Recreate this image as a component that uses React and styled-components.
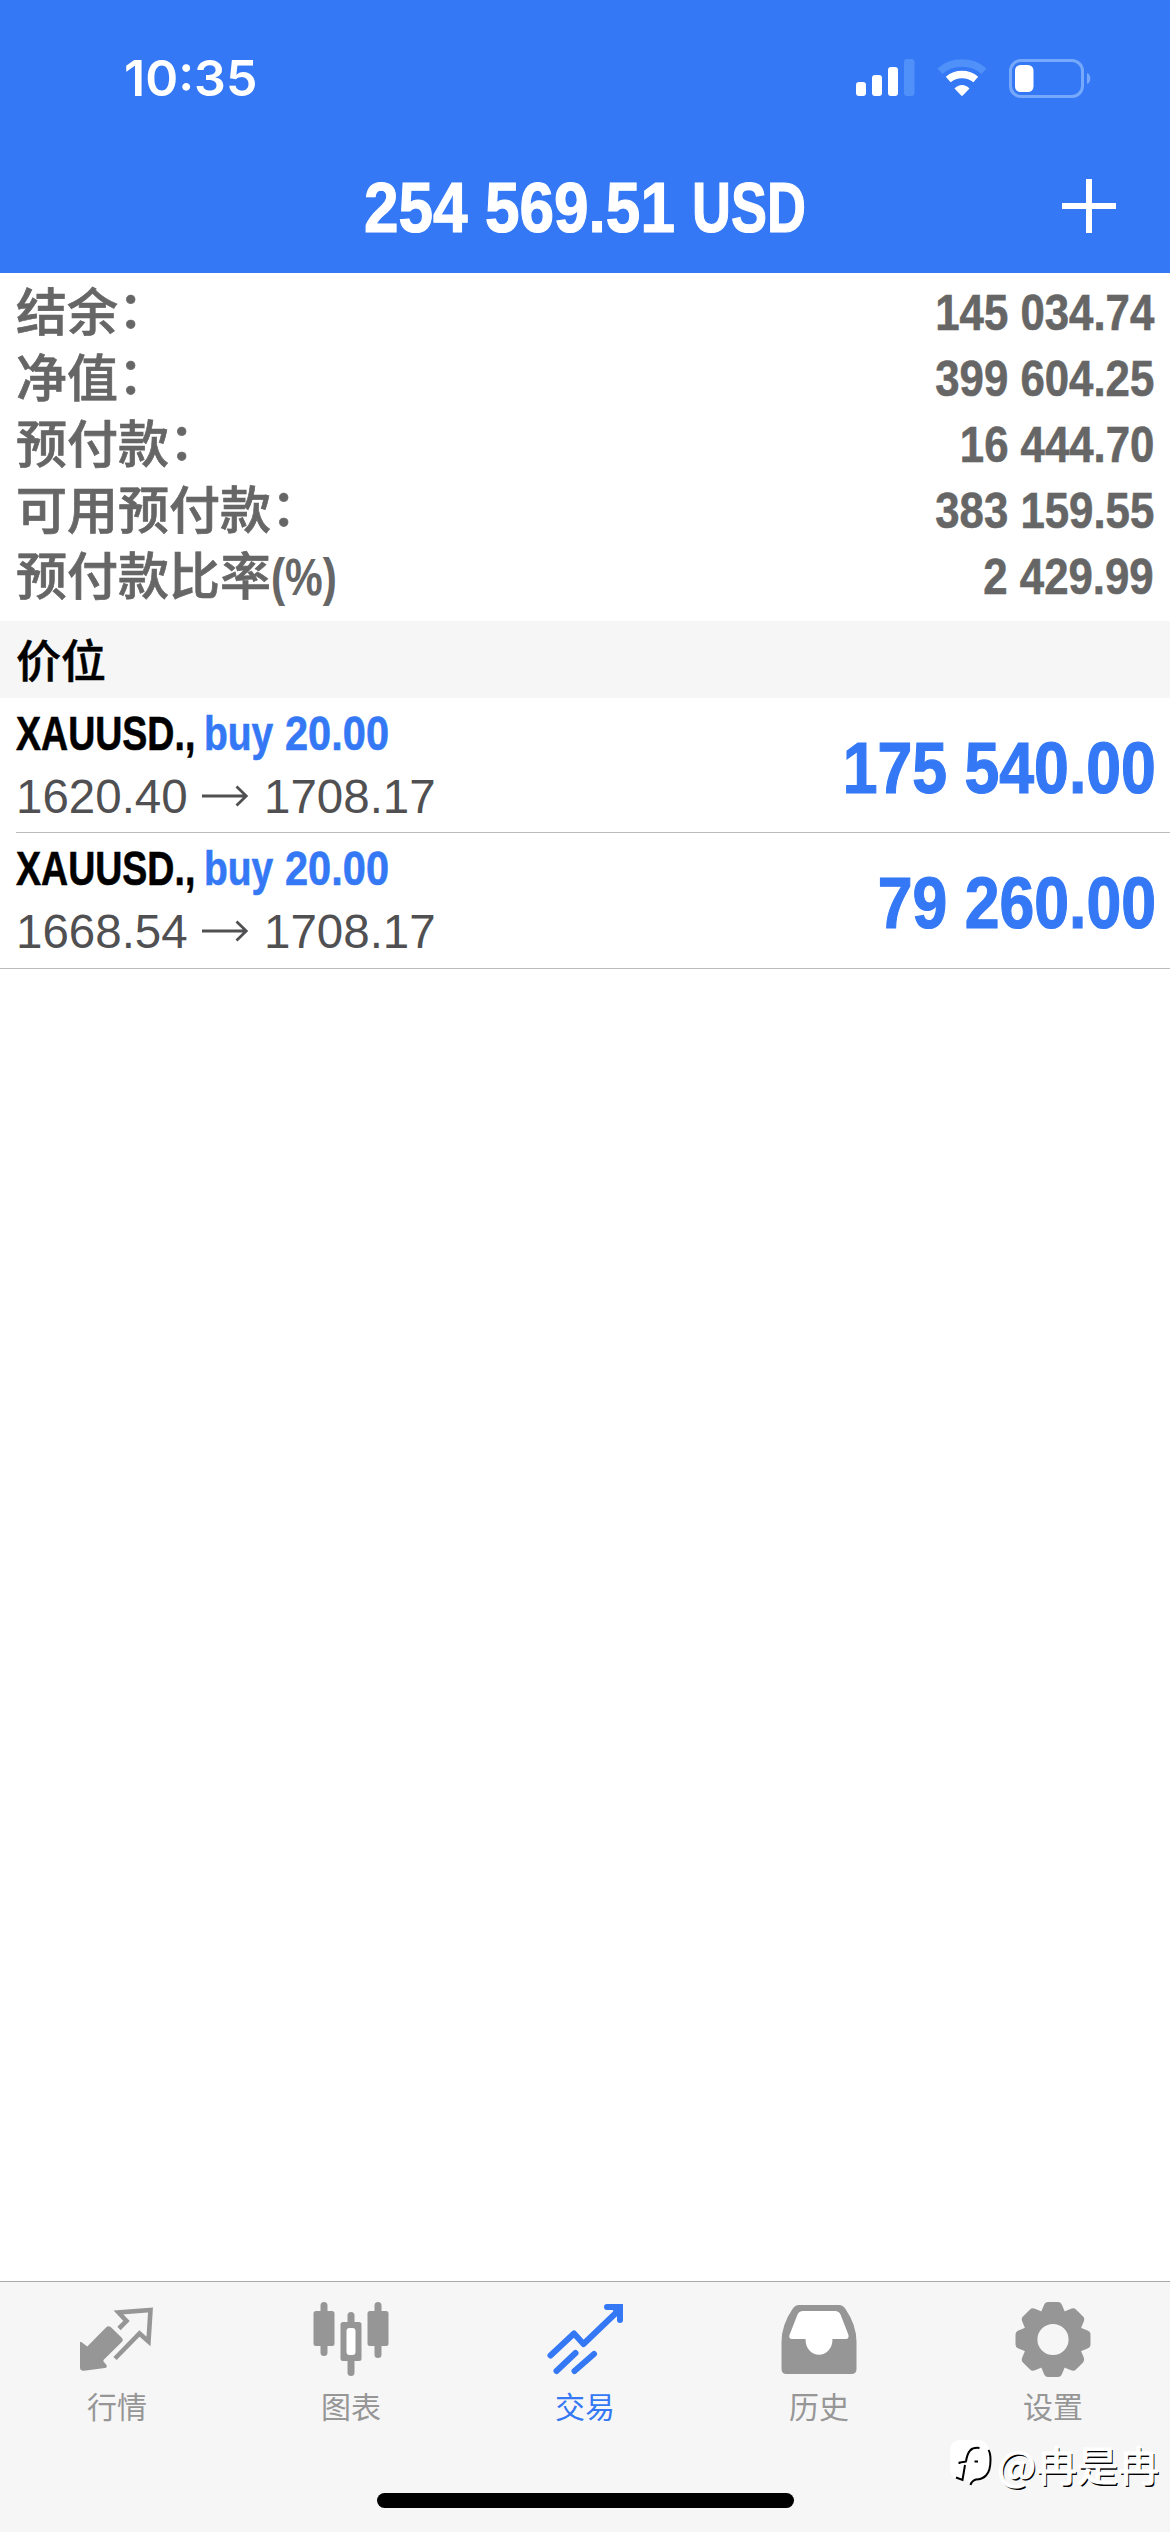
import React from 'react';
import styled, { createGlobalStyle } from 'styled-components';

const GlobalStyle = createGlobalStyle`
  body {
    margin: 0;
    background: #fff;
  }

  * {
    box-sizing: border-box;
  }
`;

const Screen = styled.div`
  position: relative;
  display: flex;
  flex-direction: column;
  width: 1170px;
  height: 2532px;
  overflow: hidden;
  background: #fff;
  font-family: 'Liberation Sans', 'Noto Sans CJK SC', sans-serif;
`;

const Header = styled.header`
  height: 273px;
  background: #3478f5;
  color: #fff;
`;

const StatusBar = styled.div`
  display: flex;
  justify-content: space-between;
  align-items: center;
  height: 156px;
  padding: 0 79px 0 124px;
`;

const Clock = styled.span`
  font-family: Inter, sans-serif;
  font-size: 50px;
  font-weight: 600;
  line-height: 60px;
`;

const StatusIcons = styled.div`
  display: flex;
  align-items: center;
  gap: 22px;
`;

const TitleBar = styled.div`
  display: grid;
  grid-template-columns: 1fr 442px 1fr;
  align-items: center;
  height: 104px;
`;

const Title = styled.h1`
  display: flex;
  grid-column: 2;
  margin: 0;
  font-size: 71px;
  line-height: 80px;
`;

const AddButton = styled.button`
  justify-self: end;
  display: flex;
  margin: 0 54px 4px 0;
  padding: 0;
  border: 0;
  background: none;
  color: #fff;
`;

const Slot = styled.span`
  display: block;
  flex: none;
  width: ${(p) => (p.$width ? `${p.$width}px` : 'auto')};
`;

// A run of bold text squeezed to the given width ratio
const Squeezed = styled.span`
  display: inline-block;
  font-weight: 700;
  white-space: pre;
  transform: scaleX(${(p) => p.$ratio || 0.875});
  transform-origin: ${(p) => p.$origin || 'left'} center;
  -webkit-text-stroke: ${(p) => p.$stroke || 0.6}px currentColor;
`;

const Summary = styled.section`
  height: 348px;
  padding: 6px 16px 0 16px;
  color: #666;
`;

const SummaryRow = styled.div`
  display: flex;
  justify-content: space-between;
  align-items: center;
  height: 66px;
`;

const SummaryLabel = styled.span`
  display: flex;
  padding-top: 4px;
  font-size: 51px;
  font-weight: 500;
  line-height: 62px;
  -webkit-text-stroke: 0.7px currentColor;
`;

const Colon = styled.span`
  font-family: 'Liberation Sans', 'Noto Sans CJK JP', sans-serif;
  font-feature-settings: 'halt';
`;

const SummaryValue = styled.span`
  padding-top: 2px;
  font-size: 50px;
  line-height: 64px;
`;

const SectionTitle = styled.h2`
  height: 77px;
  margin: 0;
  padding-left: 16px;
  background: #f6f6f6;
  color: #000;
  font-family: 'Noto Sans CJK SC', sans-serif;
  font-size: 45px;
  font-weight: 500;
  line-height: 75px;
  -webkit-text-stroke: 0.5px currentColor;
`;

const PositionItem = styled.div`
  display: flex;
  justify-content: space-between;
  height: ${(p) => (p.$last ? 136 : 135)}px;
  margin-left: ${(p) => (p.$last ? 0 : 16)}px;
  padding-left: ${(p) => (p.$last ? 16 : 0)}px;
  padding-right: 14px;
  border-bottom: 1px solid #bcbcbe;
`;

const Deal = styled.div`
  display: flex;
  flex-direction: column;
  padding-top: 7px;
`;

const DealName = styled.div`
  display: flex;
  height: 62px;
  color: #000;
  font-size: 47.5px;
  line-height: 58px;
`;

const Buy = styled.span`
  display: flex;
  color: #3478f5;
`;

const Prices = styled.div`
  display: flex;
  align-items: center;
  height: 60px;
  color: #505052;
  font-size: 47.5px;
  line-height: 60px;
`;

const ArrowSlot = styled.span`
  display: flex;
  width: 62px;
  padding-bottom: 2px;
`;

const Profit = styled.div`
  padding-top: 30px;
  color: #3478f5;
  font-size: 71.5px;
  line-height: 80px;
`;

const TabBar = styled.nav`
  display: grid;
  grid-template-columns: repeat(5, 1fr);
  height: 251px;
  margin-top: auto;
  padding-top: 17px;
  border-top: 1px solid #a9a9ab;
  background: #f6f6f6;
`;

const Tab = styled.div`
  display: flex;
  flex-direction: column;
  align-items: center;
  gap: 6px;
  color: ${(p) => (p.$active ? '#3478f5' : '#969696')};
  font-family: 'Noto Sans CJK SC', sans-serif;
  font-size: 30px;
  font-weight: 400;
  line-height: 40px;
`;

const HomeIndicator = styled.div`
  position: absolute;
  left: 377px;
  bottom: 24px;
  width: 417px;
  height: 15px;
  border-radius: 8px;
  background: #000;
`;

const Watermark = styled.div`
  position: absolute;
  right: 11px;
  bottom: 38px;
  display: flex;
  align-items: center;
  gap: 4px;
  color: #fff;
  font-family: 'Noto Sans CJK SC', sans-serif;
  font-size: 41px;
  line-height: 56px;
`;

const WatermarkText = styled.span`
  padding-bottom: 3px;
  text-shadow: 1.5px 1.5px 0 #000;
  -webkit-text-stroke: 1.2px #fff;
`;

const SignalIcon = () => (
  <svg width="59" height="38" viewBox="0 0 59 38" fill="#fff">
    <rect x="0" y="23" width="10" height="14" rx="3" />
    <rect x="16" y="16" width="10" height="21" rx="3" />
    <rect x="32" y="8" width="10" height="29" rx="3" />
    <rect x="48" y="0" width="10.5" height="37" rx="3" fill="#5090f9" />
  </svg>
);

const WifiIcon = () => (
  <svg width="50" height="38" viewBox="0 0 50 38" fill="none">
    <path d="M3 12.2C15 1.4 35 1.4 47 12.2" stroke="#5090f9" strokeWidth="7.5" />
    <path d="M11.2 20.5C19.2 13.8 30.8 13.8 38.8 20.5" stroke="#fff" strokeWidth="7.5" />
    <path d="M17.5 29.5C21.5 24.8 28.5 24.8 32.5 29.5L25.8 36.6Q25 37.4 24.2 36.6Z" fill="#fff" />
  </svg>
);

const BatteryIcon = () => (
  <svg width="82" height="39" viewBox="0 0 82 39">
    <rect x="1.5" y="1.5" width="72" height="36" rx="10.5" fill="none" stroke="#76a9fb" strokeWidth="3" />
    <rect x="6" y="6" width="18.5" height="27" rx="5.5" fill="#fff" />
    <path d="M78 14C82.5 15.5 82.5 23.5 78 25Z" fill="#76a9fb" />
  </svg>
);

const PlusIcon = () => (
  <svg width="54" height="54" viewBox="0 0 54 54" stroke="currentColor" strokeWidth="6">
    <path d="M27 0V54M0 27H54" />
  </svg>
);

const ArrowIcon = () => (
  <svg width="46" height="22" viewBox="0 0 46 22" fill="none" stroke="currentColor" strokeWidth="2.8">
    <path d="M0 11H44M34.5 1.5L44.3 11L34.5 20.5" />
  </svg>
);

const QuotesIcon = () => (
  <svg width="76" height="80" viewBox="0 0 76 80">
    <path
      d="M40 29.5L47.5 22L39.5 13.5L71.5 11L69.5 42.5L60.5 34.5L36 59.5"
      fill="none"
      stroke="currentColor"
      strokeWidth="4.6"
    />
    <path
      fill="currentColor"
      d="M1 44Q1 42 3 43.5L8.3 47.5L27 28.5Q29.5 26 32 28.2L42.5 38.5Q45 41 42.5 43.3L24.5 61V62.5L27.5 66Q28.5 68.5 26 69L5 71.8Q1 72 1 68.5Z"
    />
  </svg>
);

const ChartIcon = () => (
  <svg width="76" height="80" viewBox="0 0 76 80">
    <path
      d="M11 6.5V53.5M65 6.5V55.5M38 16.5V30M38 60V73.5"
      stroke="currentColor"
      strokeWidth="7"
      strokeLinecap="round"
    />
    <rect x="0.5" y="12" width="21" height="35" rx="2.5" fill="currentColor" />
    <rect x="54.5" y="12" width="21" height="35" rx="2.5" fill="currentColor" />
    <rect x="27.5" y="23" width="21" height="39" rx="2.5" fill="currentColor" />
    <rect x="33.5" y="29" width="9" height="27" rx="3" fill="#fff" />
  </svg>
);

const TradeIcon = () => (
  <svg
    width="76"
    height="80"
    viewBox="0 0 76 80"
    fill="none"
    stroke="currentColor"
    strokeWidth="6"
    strokeLinecap="round"
  >
    <path d="M3.5 56.5L27 34.5L36.5 45L72 11" strokeLinejoin="round" />
    <path d="M60 8H73V21" />
    <path d="M64 8H73V17Z" fill="currentColor" strokeWidth="2" />
    <path d="M9.5 72L28.5 54M27.5 72L47 55" />
  </svg>
);

const HistoryIcon = () => (
  <svg width="76" height="80" viewBox="0 -1 76 80">
    <path
      fill="currentColor"
      d="M18 5H58Q62 5 64.5 9Q75.5 25 75.5 42V69Q75.5 74 70.5 74H5.5Q0.5 74 0.5 69V42Q0.5 25 11.5 9Q14 5 18 5Z"
    />
    <path
      fill="#fff"
      d="M22 11H54Q58 11 59.5 14.5L67.5 35Q68 39 65 39H51.5C51.5 60 24.5 60 24.5 39H11Q7.5 39 8.5 35L16.5 14.5Q18 11 22 11Z"
    />
  </svg>
);

const SettingsIcon = () => (
  <svg width="76" height="80" viewBox="0 0 76 80">
    <g transform="translate(38 40.5)" fill="currentColor">
      <circle r="22.6" fill="none" stroke="currentColor" strokeWidth="14" />
      {[0, 45, 90, 135, 180, 225, 270, 315].map((angle) => (
        <path
          key={angle}
          transform={`rotate(${angle})`}
          d="M-12.5 -26L-9 -34.5Q-7.8 -37.5 -5 -37.5H5Q7.8 -37.5 9 -34.5L12.5 -26Z"
        />
      ))}
    </g>
  </svg>
);

const WatermarkIcon = () => (
  <svg width="43" height="50" viewBox="0 0 43 50">
    <path d="M11 0H27Q39 0 39 12V25Q39 37 28 40Q24 41 20 44L17 40H12Q0 40 0 28V12Q0 0 11 0Z" fill="#fff" />
    <path
      d="M38.500 10Q40.500 13 40.500 20Q40.500 31 36 35.500Q32 39.500 26 39.500Q21.500 41 20.500 45"
      fill="none"
      stroke="#000"
      strokeWidth="2"
    />
    <path
      d="M29.500 8C21 7 17.500 11 16 21.500M16.500 21.500L9.500 22.500V24M24.500 21.500H28M15 25L12.500 40L6 37.500"
      fill="none"
      stroke="#000"
      strokeWidth="2"
    />
  </svg>
);

const summary = [
  { label: '结余', suffix: '：', value: '145 034.74' },
  { label: '净值', suffix: '：', value: '399 604.25' },
  { label: '预付款', suffix: '：', value: '16 444.70' },
  { label: '可用预付款', suffix: '：', value: '383 159.55' },
  { label: '预付款比率', unit: '(%)', value: '2 429.99' },
];

const positions = [
  { symbol: 'XAUUSD.,', volume: '20.00', open: '1620.40', current: '1708.17', profit: '175 540.00' },
  { symbol: 'XAUUSD.,', volume: '20.00', open: '1668.54', current: '1708.17', profit: '79 260.00' },
];

const tabs = [
  { label: '行情', Icon: QuotesIcon },
  { label: '图表', Icon: ChartIcon },
  { label: '交易', Icon: TradeIcon, active: true },
  { label: '历史', Icon: HistoryIcon },
  { label: '设置', Icon: SettingsIcon },
];

const App = () => (
  <>
    <GlobalStyle />
    <Screen>
      <Header>
        <StatusBar>
          <Clock>10:35</Clock>
          <StatusIcons>
            <SignalIcon />
            <WifiIcon />
            <BatteryIcon />
          </StatusIcons>
        </StatusBar>
        <TitleBar>
          <Title>
            <Slot $width={328}>
              <Squeezed $stroke={1.2}>254 569.51</Squeezed>
            </Slot>
            <Slot>
              <Squeezed $ratio={0.76} $stroke={1.2}>USD</Squeezed>
            </Slot>
          </Title>
          <AddButton aria-label="+">
            <PlusIcon />
          </AddButton>
        </TitleBar>
      </Header>

      <Summary>
        {summary.map((row) => (
          <SummaryRow key={row.label}>
            <SummaryLabel>
              {row.label}
              {row.suffix && <Colon lang="ja">{row.suffix}</Colon>}
              {row.unit && <Squeezed $ratio={0.83} $stroke={0.1}>{row.unit}</Squeezed>}
            </SummaryLabel>
            <SummaryValue>
              <Squeezed $origin="right">{row.value}</Squeezed>
            </SummaryValue>
          </SummaryRow>
        ))}
      </Summary>

      <SectionTitle>价位</SectionTitle>

      {positions.map((item, index) => (
        <PositionItem key={item.open} $last={index === positions.length - 1}>
          <Deal>
            <DealName>
              <Slot $width={188}>
                <Squeezed $ratio={0.79}>{item.symbol}</Squeezed>
              </Slot>
              <Buy>
                <Slot $width={81}>
                  <Squeezed $ratio={0.82}>buy</Squeezed>
                </Slot>
                <Slot>
                  <Squeezed>{item.volume}</Squeezed>
                </Slot>
              </Buy>
            </DealName>
            <Prices>
              <Slot $width={186}>{item.open}</Slot>
              <ArrowSlot>
                <ArrowIcon />
              </ArrowSlot>
              <Slot>{item.current}</Slot>
            </Prices>
          </Deal>
          <Profit>
            <Squeezed $origin="right" $stroke={1.2}>{item.profit}</Squeezed>
          </Profit>
        </PositionItem>
      ))}

      <TabBar>
        {tabs.map(({ label, Icon, active }) => (
          <Tab key={label} $active={active}>
            <Icon />
            {label}
          </Tab>
        ))}
      </TabBar>

      <HomeIndicator />
      <Watermark>
        <WatermarkIcon />
        <WatermarkText>@冉是冉</WatermarkText>
      </Watermark>
    </Screen>
  </>
);

export default App;
